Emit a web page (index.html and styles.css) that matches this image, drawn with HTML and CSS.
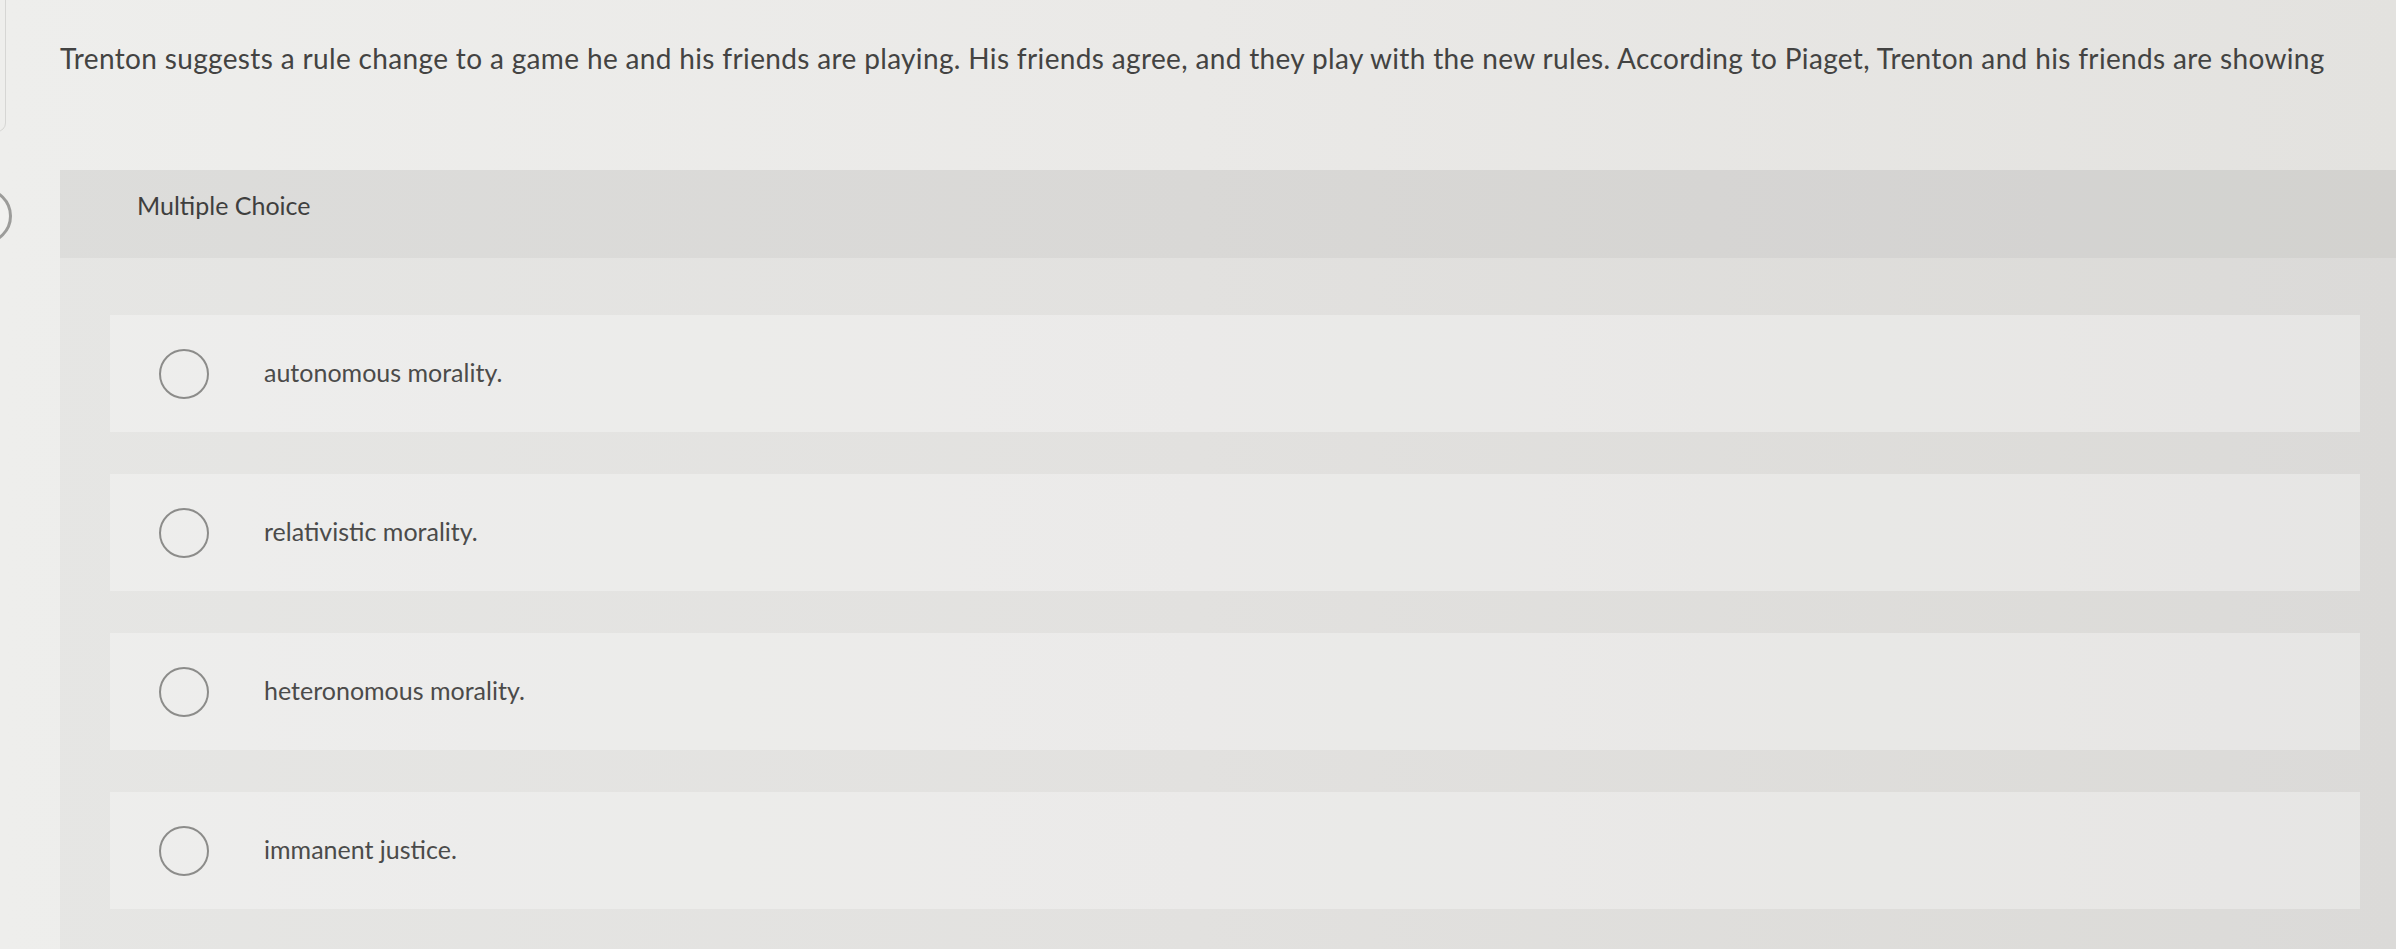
FILE: index.html
```html
<!DOCTYPE html>
<html lang="en">
<head>
    <meta charset="UTF-8">
    <meta name="viewport" content="width=device-width, initial-scale=1.0">
    <title>Multiple Choice</title>
    <link rel="stylesheet" href="styles.css">
</head>
<body>
    <div class="card-edge"></div>
    <div class="side-button"></div>

    <div class="question">
        <p>Trenton suggests a rule change to a game he and his friends are playing. His friends agree, and they play with the new rules. According to Piaget, Trenton and his friends are showing</p>
    </div>

    <div class="mc">
        <div class="mc-head">Multiple Choice</div>
        <div class="mc-body">
            <label class="option">
                <span class="radio"></span>
                <span class="option-text">autonomous morality.</span>
            </label>
            <label class="option">
                <span class="radio"></span>
                <span class="option-text">relativistic morality.</span>
            </label>
            <label class="option">
                <span class="radio"></span>
                <span class="option-text">heteronomous morality.</span>
            </label>
            <label class="option">
                <span class="radio"></span>
                <span class="option-text">immanent justice.</span>
            </label>
        </div>
    </div>
</body>
</html>
```

FILE: styles.css
```css
html, body {
    height: 100%;
}
body {
    margin: 0;
    position: relative;
    overflow: hidden;
    font-family: Lato, 'Open Sans', sans-serif;
    color: #434342;
    background: linear-gradient(90deg, #eeeeec 0%, #eae9e7 50%, #e3e2df 100%);
}
.card-edge {
    position: absolute;
    left: -12px;
    top: -12px;
    width: 16px;
    height: 142px;
    border: 1px solid #d6d6d4;
    border-radius: 10px;
}
.side-button {
    position: absolute;
    left: -44px;
    top: 188px;
    width: 50px;
    height: 50px;
    border: 3px solid #9c9c9a;
    border-radius: 50%;
    background-color: #f1f1ef;
}
.question {
    padding: 41px 40px 0 60px;
    height: 129px;
}
.question p {
    margin: 0;
    font-size: 28px;
    letter-spacing: 0.35px;
    line-height: 34px;
    white-space: nowrap;
}
.mc {
    margin-left: 60px;
}
.mc-head {
    height: 70px;
    padding: 0 0 18px 77px;
    display: flex;
    align-items: center;
    font-size: 25px;
    color: #3f3f3e;
    background-color: rgba(0, 0, 0, 0.07);
}
.mc-body {
    display: flex;
    flex-direction: column;
    gap: 42px;
    padding: 57px 36px 43px 50px;
    background-color: rgba(0, 0, 0, 0.03);
}
.option {
    height: 117px;
    display: flex;
    align-items: center;
    padding-left: 49px;
    background-color: rgba(255, 255, 255, 0.32);
    cursor: pointer;
}
.radio {
    width: 46px;
    height: 46px;
    border: 2px solid #8c8c8a;
    border-radius: 50%;
    flex-shrink: 0;
}
.option-text {
    margin: 0 0 4px 55px;
    font-size: 25px;
    color: #4b4b4a;
}
```
